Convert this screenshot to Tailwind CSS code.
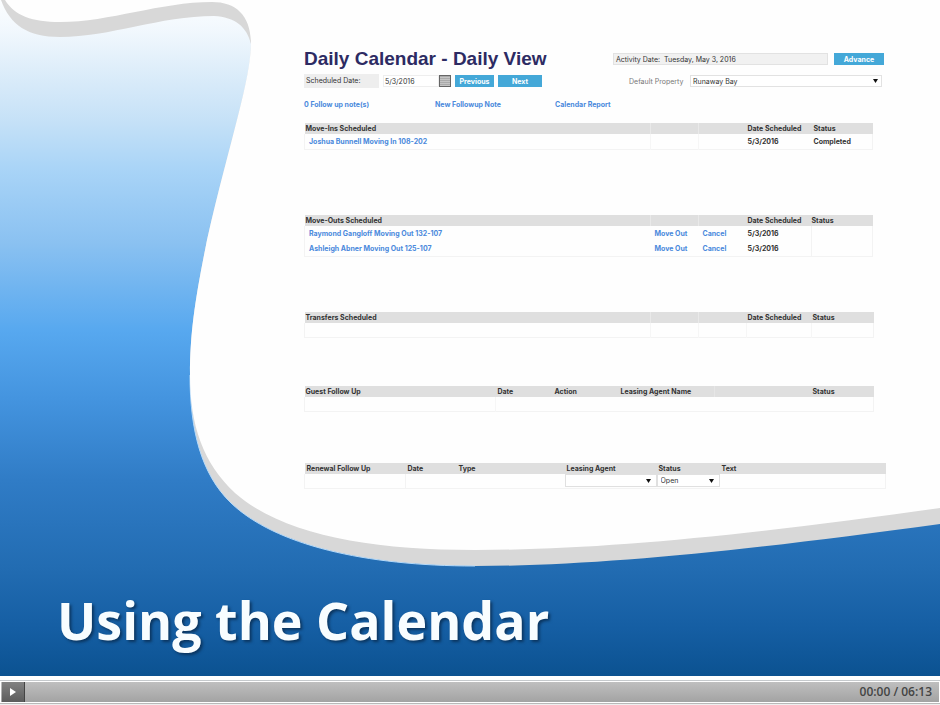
<!DOCTYPE html>
<html lang="en">
<head>
<meta charset="utf-8">
<meta name="viewport" content="width=device-width, initial-scale=1">
<title>Using the Calendar</title>
<script src="https://cdn.jsdelivr.net/npm/@tailwindcss/browser@4"></script>
</head>
<body class="flex min-h-screen flex-col bg-white font-[Inter,'Liberation_Sans',Arial,sans-serif]">
<main class="relative isolate flex flex-1 flex-col overflow-hidden">
  <!-- Slide backdrop: gradient, grey ribbon and white page -->
  <svg class="absolute inset-0 -z-10 h-full w-full" viewBox="0 0 940 676" preserveAspectRatio="none" aria-hidden="true">
    <defs>
      <linearGradient id="sky" x1="0" y1="0" x2="0" y2="1">
        <stop offset="0" stop-color="#fcfeff"/>
        <stop offset=".05" stop-color="#f0f7fd"/>
        <stop offset=".1" stop-color="#dfeefa"/>
        <stop offset=".18" stop-color="#c5e1f7"/>
        <stop offset=".25" stop-color="#a9d4f7"/>
        <stop offset=".36" stop-color="#8ac1f1"/>
        <stop offset=".49" stop-color="#57a8ef"/>
        <stop offset=".59" stop-color="#4494df"/>
        <stop offset=".71" stop-color="#307cc6"/>
        <stop offset=".84" stop-color="#226cb2"/>
        <stop offset=".93" stop-color="#155ea3"/>
        <stop offset="1" stop-color="#0b5291"/>
      </linearGradient>
    </defs>
    <rect width="940" height="676" fill="url(#sky)"/>
    <path fill="#d8d8d8" d="M1 0C10 25 28 37 60 37C110 37 160 16 214 16C235 17 247 27 251 44C251 80 230 140 207 240C196 295 190 330 190 375C190 430 201 474 231 503C275 545 365 566 475 566C600 566 750 550 940 524V0Z"/>
    <path fill="none" stroke="#b5dafa" stroke-width="1" d="M190 375C190 430 201 474 231 503C275 545 365 566 475 566"/>
    <path fill="#fefefe" d="M5 0C15 16 32 22 60 22C110 22 160 2 212 2C236 2 250 15 251 42C251 80 230 140 207 240C196 295 190 330 190 375C190 425 203 463 235 493C283 535 370 550 475 550C600 550 750 535 940 508V0Z"/>
  </svg>

  <section class="flex flex-col pt-[47px] pr-[54px] pl-[304px] text-[7px] leading-[11px] text-[#333]">
    <header class="flex justify-between gap-4">
      <div>
        <h1 class="font-['Liberation_Sans',Arial,sans-serif] text-[19px] leading-6 font-bold whitespace-nowrap text-[#2d2b63]">Daily Calendar - Daily View</h1>
        <div class="mt-1 flex h-3 items-center">
          <label for="scheduled" class="w-[75px] bg-[#eeeeee] pl-0.5 leading-[14px]">Scheduled Date:</label>
          <input id="scheduled" value="5/3/2016" class="ml-1 h-3 w-[56px] border border-[#eeeeee] bg-white pl-px">
          <button aria-label="Pick a date">
            <svg class="block h-3 w-3" viewBox="0 0 12 12"><rect x=".5" y=".5" width="11" height="11" fill="#c4c4c4" stroke="#666"/><path d="M1 3.5H11M1 5.5H11M1 7.5H11M1 9.5H11" stroke="#aaa"/><path d="M1 1.5H11" stroke="#aaa"/></svg>
          </button>
          <button class="ml-1 h-3 w-[39px] bg-[#44a8d8] font-bold text-white">Previous</button>
          <button class="ml-1 h-3 w-[44px] bg-[#44a8d8] font-bold text-white">Next</button>
        </div>
      </div>
      <div class="mt-1.5 mr-0.5 flex w-[271px] flex-col gap-2.5">
        <div class="flex h-3 gap-1.5">
          <p class="flex-1 border border-[#e2e2e2] bg-[#f1f1f1] pl-0.5 leading-[11px] whitespace-pre">Activity Date:  Tuesday, May 3, 2016</p>
          <button class="w-[50px] bg-[#44a8d8] font-bold text-white">Advance</button>
        </div>
        <div class="flex h-3 items-center gap-0.5 pl-4">
          <label for="property" class="w-[59px] whitespace-nowrap text-[#777]">Default Property</label>
          <div class="relative mr-0.5 h-3 flex-1">
            <select id="property" class="block h-3 w-full appearance-none border border-[#e2e2e2] bg-white pl-0.5 leading-[11px]"><option>Runaway Bay</option></select>
            <svg class="pointer-events-none absolute top-1 right-1 h-1 w-[5px]" viewBox="0 0 5 4"><path d="M0 0H5L2.5 4Z" fill="#111"/></svg>
          </div>
        </div>
      </div>
    </header>

    <nav class="mt-3 flex leading-[11px] font-bold text-[#4a89dc]">
      <a href="#" class="w-[131px]">0 Follow up note(s)</a>
      <a href="#" class="w-[120px]">New Followup Note</a>
      <a href="#">Calendar Report</a>
    </nav>

    <div class="mt-[13px] mr-[13px] h-[92px]">
      <table class="w-full table-fixed text-left font-bold">
        <colgroup><col><col class="w-[48px]"><col class="w-[48px]"><col class="w-[65px]"><col class="w-[61px]"></colgroup>
        <thead class="bg-[#dfdfdf]"><tr class="h-[11px]"><th class="p-0 pl-px">Move-Ins Scheduled</th><th class="border-l border-[#e9e9e9] p-0"></th><th class="border-l border-[#e9e9e9] p-0"></th><th class="p-0 pl-px whitespace-nowrap">Date Scheduled</th><th class="p-0 pl-0.5">Status</th></tr></thead>
        <tbody class="border border-t-0 border-[#f3f3f3]"><tr class="h-[15px]"><td class="p-0 pl-1"><a href="#" class="text-[#4a89dc]">Joshua Bunnell Moving In 108-202</a></td><td class="border-l border-[#f6f6f6]"></td><td class="border-l border-[#f6f6f6]"></td><td class="p-0 pl-px">5/3/2016</td><td class="p-0 pl-0.5">Completed</td></tr></tbody>
      </table>
    </div>

    <div class="mr-[13px] h-[97px]">
      <table class="w-full table-fixed text-left font-bold">
        <colgroup><col><col class="w-[48px]"><col class="w-[48px]"><col class="w-[65px]"><col class="w-[61px]"></colgroup>
        <thead class="bg-[#dfdfdf]"><tr class="h-[11px]"><th class="p-0 pl-px">Move-Outs Scheduled</th><th class="border-l border-[#e9e9e9] p-0"></th><th class="border-l border-[#e9e9e9] p-0"></th><th class="p-0 pl-px whitespace-nowrap">Date Scheduled</th><th class="p-0">Status</th></tr></thead>
        <tbody class="border border-t-0 border-[#f3f3f3]">
          <tr class="h-[15px]"><td class="p-0 pl-1"><a href="#" class="text-[#4a89dc]">Raymond Gangloff Moving Out 132-107</a></td><td class="p-0 pl-1"><a href="#" class="text-[#4a89dc]">Move Out</a></td><td class="p-0 pl-1"><a href="#" class="text-[#4a89dc]">Cancel</a></td><td class="p-0 pl-px">5/3/2016</td><td class="border-l border-[#f3f3f3] p-0"></td></tr>
          <tr class="h-[15px]"><td class="p-0 pl-1"><a href="#" class="text-[#4a89dc]">Ashleigh Abner Moving Out 125-107</a></td><td class="p-0 pl-1"><a href="#" class="text-[#4a89dc]">Move Out</a></td><td class="p-0 pl-1"><a href="#" class="text-[#4a89dc]">Cancel</a></td><td class="p-0 pl-px">5/3/2016</td><td class="border-l border-[#f3f3f3] p-0"></td></tr>
        </tbody>
      </table>
    </div>

    <div class="mr-3 h-[74px]">
      <table class="w-full table-fixed text-left font-bold">
        <colgroup><col><col class="w-[48px]"><col class="w-[48px]"><col class="w-[65px]"><col class="w-[62px]"></colgroup>
        <thead class="bg-[#dfdfdf]"><tr class="h-[11px]"><th class="p-0 pl-px">Transfers Scheduled</th><th class="border-l border-[#e9e9e9] p-0"></th><th class="border-l border-[#e9e9e9] p-0"></th><th class="p-0 pl-px whitespace-nowrap">Date Scheduled</th><th class="p-0 pl-px">Status</th></tr></thead>
        <tbody class="border border-t-0 border-[#f3f3f3]"><tr class="h-[14px]"><td></td><td class="border-l border-[#f6f6f6]"></td><td class="border-l border-[#f6f6f6]"></td><td class="border-l border-[#f6f6f6]"></td><td class="border-l border-[#f6f6f6]"></td></tr></tbody>
      </table>
    </div>

    <div class="mr-3 h-[77px]">
      <table class="w-full table-fixed text-left font-bold">
        <colgroup><col><col class="w-[57px]"><col class="w-[66px]"><col class="w-[96px]"><col class="w-[96px]"><col class="w-[63px]"></colgroup>
        <thead class="bg-[#dfdfdf]"><tr class="h-[11px]"><th class="p-0 pl-px">Guest Follow Up</th><th class="p-0 pl-0.5">Date</th><th class="p-0 pl-0.5">Action</th><th class="p-0 pl-0.5">Leasing Agent Name</th><th class="border-l border-[#e6e6e6] p-0"></th><th class="p-0 pl-0.5">Status</th></tr></thead>
        <tbody class="border border-t-0 border-[#f3f3f3]"><tr class="h-[14px]"><td></td><td class="border-l border-[#f6f6f6]"></td><td></td><td></td><td></td><td></td></tr></tbody>
      </table>
    </div>

    <table class="w-full table-fixed text-left font-bold">
      <colgroup><col class="w-[101px]"><col class="w-[51px]"><col class="w-[108px]"><col class="w-[92px]"><col class="w-[63px]"><col></colgroup>
      <thead class="bg-[#dfdfdf]"><tr class="h-[11px]"><th class="p-0 pl-0.5">Renewal Follow Up</th><th class="p-0 pl-0.5">Date</th><th class="p-0 pl-0.5">Type</th><th class="p-0 pl-0.5">Leasing Agent</th><th class="p-0 pl-0.5">Status</th><th class="p-0 pl-0.5">Text</th></tr></thead>
      <tbody class="border border-t-0 border-[#f3f3f3] font-normal"><tr class="h-[14px]"><td></td><td class="border-l border-[#f3f3f3]"></td><td></td>
        <td class="p-0"><div class="relative"><select aria-label="Leasing Agent" class="block h-[13px] w-full appearance-none border border-[#e0e0e0] bg-white"><option></option></select><svg class="pointer-events-none absolute top-[5px] right-1.5 h-1 w-[5px]" viewBox="0 0 5 4"><path d="M0 0H5L2.5 4Z" fill="#111"/></svg></div></td>
        <td class="p-0"><div class="relative"><select aria-label="Status" class="block h-[13px] w-full appearance-none border border-[#e0e0e0] bg-white pl-[3px] leading-[12px]"><option>Open</option></select><svg class="pointer-events-none absolute top-[5px] right-1.5 h-1 w-[5px]" viewBox="0 0 5 4"><path d="M0 0H5L2.5 4Z" fill="#111"/></svg></div></td><td></td></tr></tbody>
    </table>
  </section>

  <h2 class="mt-auto mb-5 pl-[57px] font-['Open_Sans','Noto_Sans',sans-serif] text-[52px] leading-[72px] font-bold text-[#f8fdff] [text-shadow:2px_2px_3px_#0b355f]">Using the Calendar</h2>
</main>

<footer class="mt-1 flex h-[25px] flex-col border-t border-[#c5c9cc] bg-[#eeeeee]">
  <div class="flex h-[22px] items-stretch border border-white bg-linear-to-b from-[#bfbfbf] to-[#a3a3a3]">
    <button aria-label="Play" class="ml-px flex w-[23px] items-center justify-center border-r border-[#444] bg-linear-to-b from-[#828282] to-[#5c5c5c]">
      <svg class="h-2 w-1.5" viewBox="0 0 6 8"><path d="M0 0L6 4L0 8Z" fill="#fff"/></svg>
    </button>
    <p class="ml-auto pr-[7px] font-['Open_Sans','Noto_Sans',sans-serif] text-[12px] leading-5 font-semibold text-[#444]">00:00 / 06:13</p>
  </div>
  <div class="border-t border-[#b9b9b9]"></div>
</footer>
</body>
</html>
